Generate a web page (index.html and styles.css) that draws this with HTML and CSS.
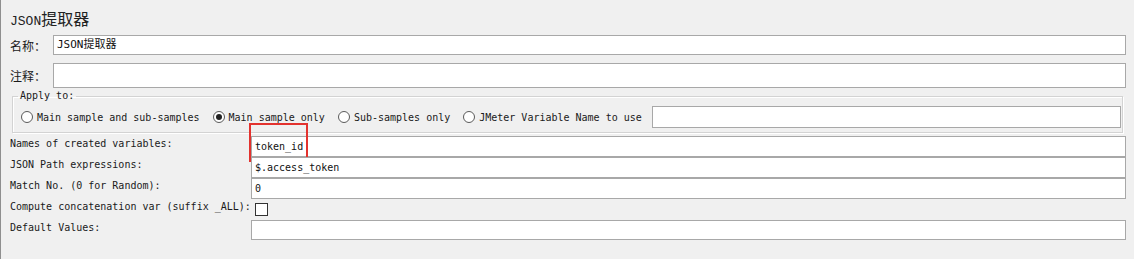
FILE: index.html
```html
<!DOCTYPE html>
<html lang="zh-CN">
<head>
  <meta charset="UTF-8" />
  <title>JSON提取器</title>
  <link rel="stylesheet" href="styles.css">
</head>
<body>

  <div id="panel">
    <h1 class="title">JSON<span class="cjk">提取器</span></h1>

    <div class="row name-row">
      <label class="cn-label">名称：</label>
      <div class="field">JSON提取器</div>
    </div>

    <div class="row comment-row">
      <label class="cn-label">注释：</label>
      <div class="field"></div>
    </div>

    <fieldset class="apply-to">
      <legend>Apply to:</legend>
      <div class="scope">
        <label class="radio"><span class="dot"></span>Main sample and sub-samples</label>
        <label class="radio"><span class="dot checked"></span>Main sample only</label>
        <label class="radio"><span class="dot"></span>Sub-samples only</label>
        <label class="radio"><span class="dot"></span>JMeter Variable Name to use</label>
        <div class="field var-field"></div>
      </div>
    </fieldset>

    <div class="form-grid">
      <label>Names of created variables:</label>
      <div class="cell">
        <div class="field">token_id</div>
        <div class="highlight"></div>
      </div>

      <label>JSON Path expressions:</label>
      <div class="cell"><div class="field">$.access_token</div></div>

      <label>Match No. (0 for Random):</label>
      <div class="cell"><div class="field">0</div></div>

      <label>Compute concatenation var (suffix _ALL):</label>
      <div class="cell"><span class="check"></span></div>

      <label>Default Values:</label>
      <div class="cell"><div class="field short"></div></div>
    </div>
  </div>

</body>
</html>
```

FILE: styles.css
```css
* {
  box-sizing: border-box;
}

body {
  margin: 0;
  min-height: 100vh;
  background: #f0f0f0;
  border-left: 1px solid #8f8f8f;
  font-family: "DejaVu Sans Mono", "Noto Sans CJK SC", monospace;
  font-size: 10px;
  color: #1a1a1a;
}

#panel {
  padding: 8px 8px 0 9px;
}

.title {
  margin: 0 0 7px;
  height: 20px;
  line-height: 20px;
  font-weight: normal;
  font-size: 13px;
  font-family: "Liberation Mono", "Noto Sans CJK SC", monospace;
  color: #222;
}

.title .cjk {
  font-size: 16px;
  line-height: 20px;
  font-family: "Noto Sans CJK SC", sans-serif;
}

.row {
  display: flex;
  align-items: center;
}

.name-row {
  margin-bottom: 8px;
}

.comment-row {
  margin-bottom: 2px;
}

.cn-label {
  width: 43px;
  flex-shrink: 0;
  font-size: 12px;
  font-family: "Noto Sans CJK SC", sans-serif;
  color: #1a1a1a;
}

.field {
  width: 100%;
  height: 21px;
  padding: 0 3px;
  border: 1px solid #a8a8a8;
  background: #fff;
  line-height: 19px;
  white-space: nowrap;
  overflow: hidden;
  color: #111;
}

.name-row .field {
  height: 20px;
  line-height: 18px;
  font-size: 11px;
}

.comment-row .field {
  height: 25px;
}

/* Apply to group */
.apply-to {
  margin: 0 3px 0 2px;
  padding: 4px 1px 4px 8px;
  border: 1px solid #d3d3d3;
  box-shadow: inset 1px 1px 0 #fff, 1px 1px 0 #fff;
}

.apply-to legend {
  margin-left: -3px;
  padding: 0 2px;
  line-height: 12px;
  color: #1a1a1a;
}

.scope {
  display: flex;
  align-items: center;
  height: 22px;
}

.radio {
  display: flex;
  align-items: center;
  gap: 4px;
  margin-right: 13px;
  white-space: nowrap;
}

.radio:last-of-type {
  margin-right: 10px;
}

.dot {
  position: relative;
  width: 12px;
  height: 12px;
  border: 1px solid #5a5a5a;
  border-radius: 50%;
  background: #fff;
}

.dot.checked::after {
  content: "";
  position: absolute;
  left: 2px;
  top: 2px;
  width: 6px;
  height: 6px;
  border-radius: 50%;
  background: #222;
}

.var-field {
  flex: 1;
  height: 22px;
}

/* extractor settings */
.form-grid {
  display: grid;
  grid-template-columns: 241px 1fr;
  grid-template-rows: 21px 21px 21px 21px 20px;
  margin-top: 3px;
}

.form-grid label {
  padding-top: 1px;
  line-height: 14px;
  white-space: nowrap;
  color: #1a1a1a;
}

.cell {
  position: relative;
}

.field.short {
  height: 20px;
}

.check {
  display: block;
  width: 13px;
  height: 13px;
  margin: 4px 0 0 4px;
  border: 1px solid #333;
  background: #fff;
}

.highlight {
  position: absolute;
  left: -2px;
  top: -13px;
  width: 59px;
  height: 39px;
  border: 2px solid #e3322e;
  pointer-events: none;
}
```
